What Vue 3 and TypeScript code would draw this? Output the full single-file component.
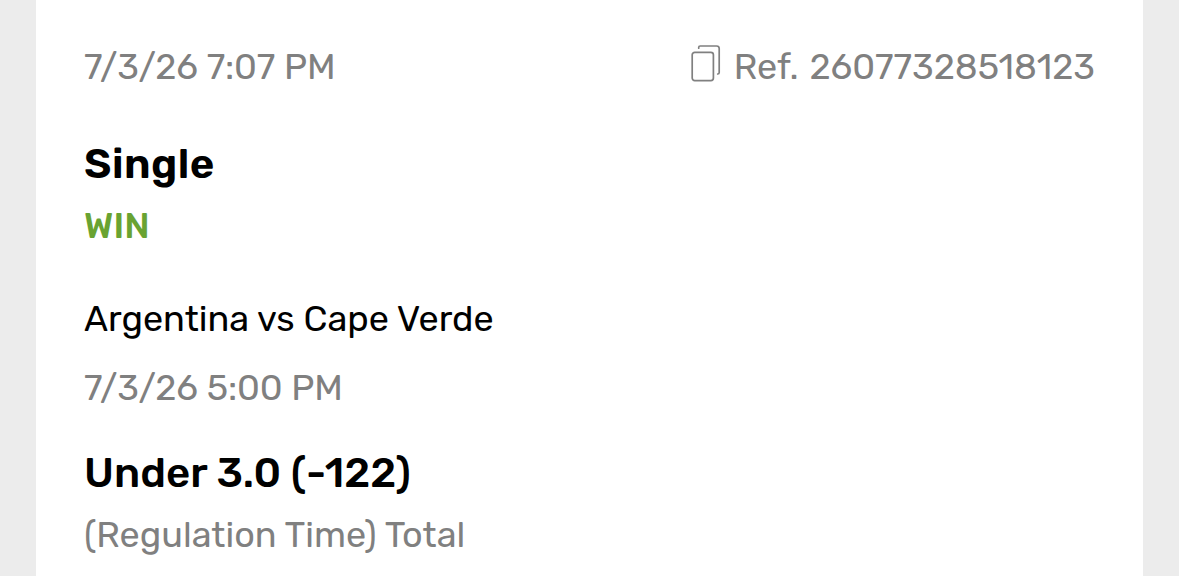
<script setup lang="ts">
const bet = {
  placed: '7/3/26 7:07 PM',
  reference: 'Ref. 26077328518123',
  type: 'Single',
  result: 'WIN',
  event: 'Argentina vs Cape Verde',
  start: '7/3/26 5:00 PM',
  selection: 'Under 3.0 (-122)',
  market: '(Regulation Time) Total',
}
</script>

<template>
  <main class="page">
    <article class="card">
      <header class="header">
        <span class="placed muted">{{ bet.placed }}</span>
        <span class="reference muted">
          <svg class="copy" width="32" height="38" viewBox="0 0 32 38" fill="none" stroke="currentColor" stroke-width="1.7" stroke-linecap="round">
            <rect x="2.2" y="7.3" width="21.2" height="28.3" rx="2.5" />
            <path d="M8.7 3.2V2.5Q8.7 1 10.2 1H26.6Q29.2 1 29.2 3.6V27.5Q29.2 29 27.7 29" />
          </svg>
          <span class="ref-number">{{ bet.reference }}</span>
        </span>
      </header>
      <h1 class="type">{{ bet.type }}</h1>
      <p class="win">{{ bet.result }}</p>
      <p class="event">{{ bet.event }}</p>
      <p class="start muted">{{ bet.start }}</p>
      <h2 class="selection">{{ bet.selection }}</h2>
      <p class="market muted">{{ bet.market }}</p>
    </article>
  </main>
</template>

<style>
body { margin: 0; }
</style>
<style scoped>
.page { height: 576px; box-sizing: border-box; padding: 0 36px; background: #ececec; overflow: hidden; font-family: Rubik, Roboto, "Liberation Sans", sans-serif; font-size: 36px; line-height: 44px; color: #000; }
.card { height: 576px; box-sizing: border-box; padding: 45px 48px 0; background: #fff; }
.header { height: 44px; display: flex; justify-content: space-between; }
.muted { color: #808080; }
.placed, .start { letter-spacing: -0.12px; }
.reference { display: flex; gap: 12px; }
.ref-number { word-spacing: 2px; }
p, h1, h2 { margin: 0; white-space: nowrap; }
.type { font-size: 42px; line-height: 50px; font-weight: 600; letter-spacing: 0.5px; margin-top: 50px; }
.win { font-weight: 500; color: #69a332; margin-top: 15px; }
.event { margin-top: 49px; }
.start { margin-top: 25px; }
.selection { font-size: 42px; line-height: 50px; font-weight: 500; margin-top: 38px; }
.market { margin-top: 15px; }
</style>
